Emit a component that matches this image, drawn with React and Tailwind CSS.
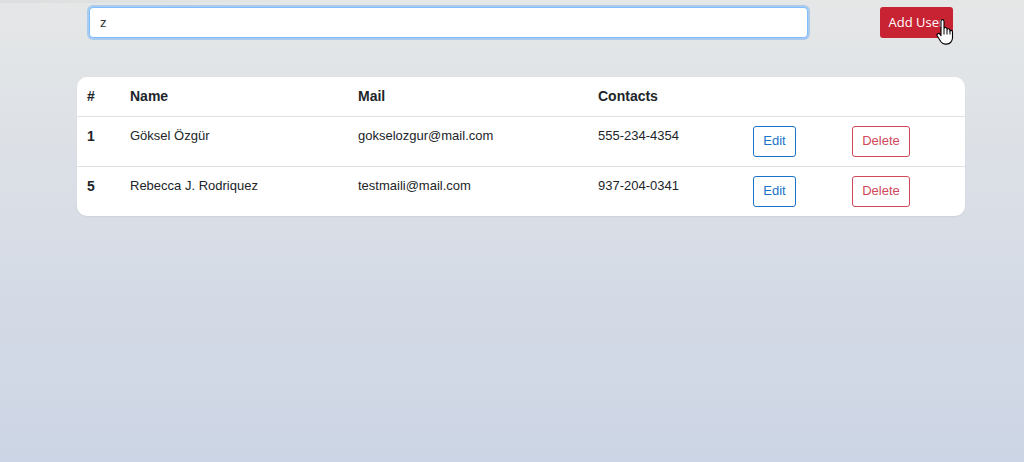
import React, { useState } from 'react';

const USERS = [
  { id: 1, name: 'Göksel Özgür', mail: 'gokselozgur@mail.com', phone: '555-234-4354' },
  { id: 5, name: 'Rebecca J. Rodriquez', mail: 'testmaili@mail.com', phone: '937-204-0341' },
];

const HandCursor = () => (
  <svg width="18" height="26" viewBox="0 0 18 26" className="absolute left-[56px] top-[12px]">
    <path
      d="M5 2.2c0-.9.7-1.6 1.5-1.6S8 1.3 8 2.2v7.3c.3-.6.9-1 1.5-1 .9 0 1.5.7 1.5 1.5v.6c.3-.5.8-.8 1.4-.8.8 0 1.5.7 1.5 1.5v.7c.3-.4.7-.6 1.2-.6.8 0 1.4.7 1.4 1.5v5.8c0 3.6-2.6 6.4-6 6.4H9.3c-2 0-3.5-1-4.6-2.6L1.3 17c-.5-.8-.3-1.8.4-2.3.7-.5 1.7-.3 2.2.4L5 16.6z"
      fill="#fff"
      stroke="#000"
      strokeWidth="1.1"
      strokeLinejoin="round"
    />
    <path d="M8 10v5.5M11 11v4.5M14 12v3.5" stroke="#000" strokeWidth="1" />
  </svg>
);

const App = () => {
  const [query, setQuery] = useState('z');

  return (
    <div
      className="min-h-[462px] w-full bg-gradient-to-b from-[#e5e7e7] via-[#d8dde6] to-[#ccd5e5] text-[#212529]"
      style={{ fontFamily: '"Liberation Sans", Arial, sans-serif' }}
    >
      <div className="h-[3px] w-[280px] bg-gradient-to-r from-[#dcdedf] to-[#e4e6e6]" />
      <div className="flex items-center pl-[89px] pt-[4px]">
        <input
          type="text"
          value={query}
          onChange={(e) => setQuery(e.target.value)}
          className="h-[31px] w-[719px] rounded-[4px] border border-[#80bdff] bg-white px-[10px] text-[13px] text-[#333] shadow-[0_0_0_2px_rgba(0,123,255,0.25)] outline-none"
        />
        <div className="relative ml-[72px]">
          <button
            className="h-[31px] w-[73px] rounded-[3px] bg-[#c82333] text-[13px] text-white"
            style={{ fontFamily: '"Open Sans", sans-serif' }}
          >
            Add User
          </button>
          <HandCursor />
        </div>
      </div>

      <div className="ml-[77px] mt-[39px] w-[888px] overflow-hidden rounded-[10px] bg-white shadow-[0_1px_2px_rgba(0,0,0,0.05)]">
        <table className="w-full table-fixed border-collapse text-left">
          <colgroup>
            <col className="w-[43px]" />
            <col className="w-[228px]" />
            <col className="w-[240px]" />
            <col className="w-[155px]" />
            <col className="w-[99px]" />
            <col className="w-[123px]" />
          </colgroup>
          <thead>
            <tr className="border-b border-[#dee2e6] text-[14px] font-bold">
              <th className="h-[39px] px-[10px] align-middle">#</th>
              <th className="px-[10px] align-middle">Name</th>
              <th className="px-[10px] align-middle">Mail</th>
              <th className="px-[10px] align-middle">Contacts</th>
              <th />
              <th />
            </tr>
          </thead>
          <tbody className="text-[13px]">
            {USERS.map((u, i) => (
              <tr key={u.id} className={i === 0 ? 'border-b border-[#dee2e6]' : ''}>
                <td className="px-[10px] pt-[9px] align-top text-[14px] font-bold leading-[20px]">{u.id}</td>
                <td className="px-[10px] pt-[9px] align-top leading-[20px]">{u.name}</td>
                <td className="px-[10px] pt-[9px] align-top leading-[20px]">{u.mail}</td>
                <td className="px-[10px] pt-[9px] align-top leading-[20px]">{u.phone}</td>
                <td className="px-[10px] pt-[9px] pb-[9px] align-top">
                  <button className="h-[31px] w-[43px] rounded-[3px] border border-[#1a73c8] text-[13px] text-[#1a73c8]">
                    Edit
                  </button>
                </td>
                <td className="px-[10px] pt-[9px] pb-[9px] align-top">
                  <button className="h-[31px] w-[58px] rounded-[3px] border border-[#d0485a] text-[13px] text-[#d0485a]">
                    Delete
                  </button>
                </td>
              </tr>
            ))}
          </tbody>
        </table>
      </div>
    </div>
  );
};

export default App;
